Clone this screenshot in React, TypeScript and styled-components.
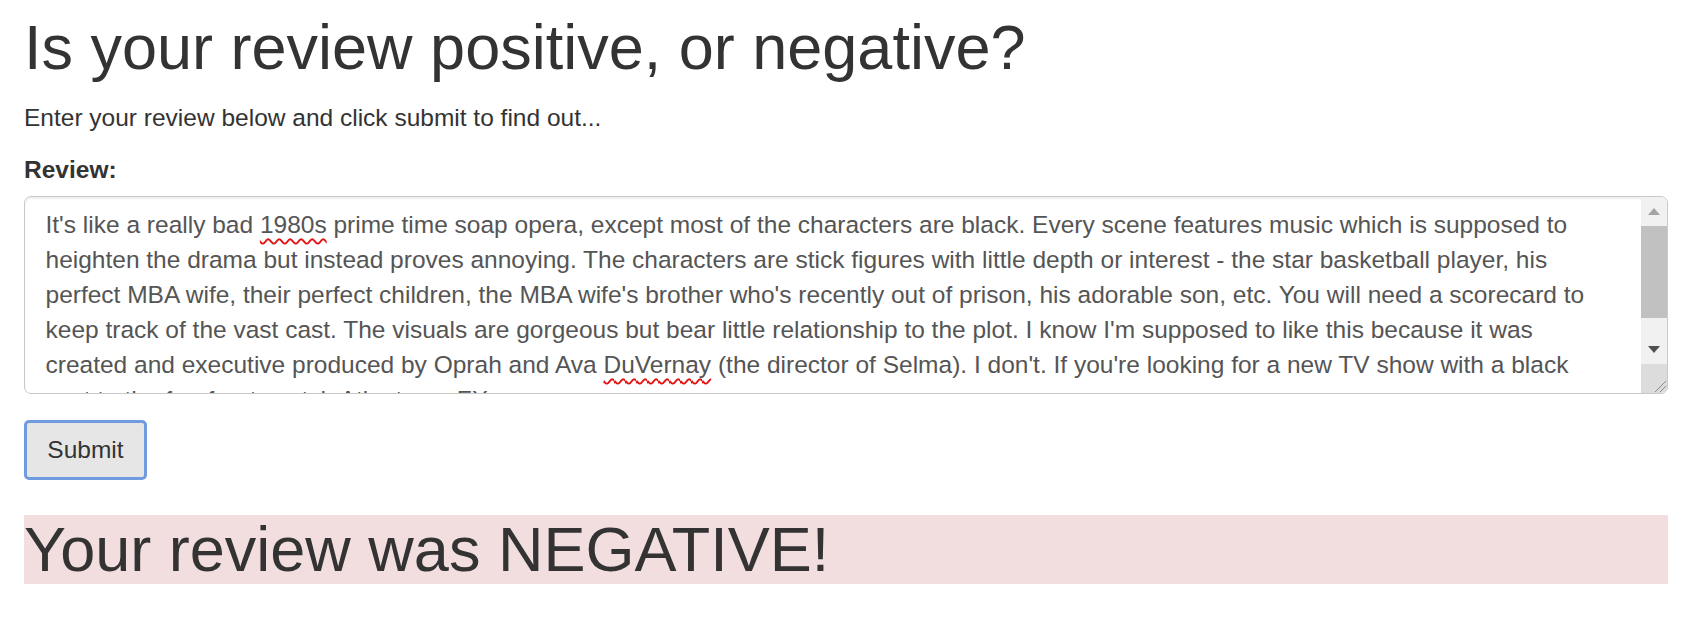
import styled, { createGlobalStyle } from 'styled-components';

const GlobalStyle = createGlobalStyle`
  html, body {
    margin: 0;
    padding: 0;
    background: #fff;
  }
  body {
    font-family: "Liberation Sans", Arial, Helvetica, sans-serif;
    color: #333;
    font-size: 24.5px;
    line-height: 35px;
  }
`;

const Page = styled.div`
  padding: 13px 0 0 24px;
  width: 1644px;
`;

const Title = styled.h1`
  margin: 0 0 17.5px;
  font-size: 63px;
  font-weight: 400;
  line-height: 1.1;
  color: #333;
`;

const Intro = styled.p`
  margin: 0 0 17.5px;
`;

const FormGroup = styled.div`
  margin-bottom: 26px;
`;

const Label = styled.label`
  display: inline-block;
  margin-bottom: 8.5px;
  font-weight: 700;
`;

const ReviewBox = styled.div`
  display: flex;
  height: 198px;
  box-sizing: border-box;
  border: 1.5px solid #c9c9c9;
  border-radius: 7px;
  overflow: hidden;
  background: #fff;
  box-shadow: inset 0 1.75px 1.75px rgba(0, 0, 0, 0.075);
`;

const ReviewText = styled.div`
  flex: 1;
  padding: 10px 32px 0 20.5px;
  color: #555;
  overflow: hidden;
`;

const Misspelled = styled.span`
  text-decoration: underline wavy #e3120f;
  text-decoration-thickness: 1.5px;
  text-underline-offset: 5px;
`;

const Scrollbar = styled.div`
  display: flex;
  flex-direction: column;
  width: 26px;
  background: #f1f1f1;
`;

const ArrowButton = styled.div`
  height: 29px;
  display: flex;
  align-items: center;
  justify-content: center;
`;

const Track = styled.div`
  flex: 1;
  display: flex;
  flex-direction: column;
`;

const Thumb = styled.div`
  height: 92px;
  background: #c1c1c1;
`;

const Resizer = styled.div`
  height: 29px;
  background: #dcdcdc;
  display: flex;
  align-items: flex-end;
  justify-content: flex-end;
`;

const SubmitButton = styled.button`
  font-family: inherit;
  font-size: 24.5px;
  line-height: 35px;
  color: #333;
  background: #e6e6e6;
  border: 3px solid #729bdf;
  border-radius: 5px;
  padding: 8px 20px 9px;
  width: 123px;
  height: 60px;
  cursor: pointer;
`;

const Result = styled.h1<{ $tone: 'danger' | 'success' }>`
  margin: 35px 0 17.5px;
  font-size: 63px;
  font-weight: 400;
  line-height: 1.1;
  color: #333;
  background: ${p => (p.$tone === 'danger' ? '#f2dede' : '#dff0d8')};
`;

const ArrowIcon = ({ up, color }: { up?: boolean; color: string }) => (
  <svg width="12" height="7" viewBox="0 0 12 7">
    <polygon points={up ? '0,7 12,7 6,0' : '0,0 12,0 6,7'} fill={color} />
  </svg>
);

export default function App() {
  return (
    <>
      <GlobalStyle />
      <Page>
        <Title>Is your review positive, or negative?</Title>
        <Intro>Enter your review below and click submit to find out...</Intro>
        <form onSubmit={e => e.preventDefault()}>
          <FormGroup>
            <Label htmlFor="review">Review:</Label>
            <ReviewBox id="review" role="textbox" aria-multiline="true">
              <ReviewText>
                It's like a really bad <Misspelled>1980s</Misspelled> prime time soap opera, except most of the
                characters are black. Every scene features music which is supposed to heighten the drama but
                instead proves annoying. The characters are stick figures with little depth or interest - the star
                basketball player, his perfect MBA wife, their perfect children, the MBA wife's brother who's
                recently out of prison, his adorable son, etc. You will need a scorecard to keep track of the vast
                cast. The visuals are gorgeous but bear little relationship to the plot. I know I'm supposed to like
                this because it was created and executive produced by Oprah and Ava <Misspelled>DuVernay</Misspelled>{' '}
                (the director of Selma). I don't. If you're looking for a new TV show with a black cast to the
                forefront, watch Atlanta on FX.
              </ReviewText>
              <Scrollbar>
                <ArrowButton>
                  <ArrowIcon up color="#a3a3a3" />
                </ArrowButton>
                <Track>
                  <Thumb />
                </Track>
                <ArrowButton>
                  <ArrowIcon color="#505050" />
                </ArrowButton>
                <Resizer>
                  <svg width="14" height="14" viewBox="0 0 14 14">
                    <line x1="2" y1="13" x2="13" y2="2" stroke="#8a8a8a" strokeWidth="1" />
                    <line x1="7" y1="13" x2="13" y2="7" stroke="#8a8a8a" strokeWidth="1" />
                  </svg>
                </Resizer>
              </Scrollbar>
            </ReviewBox>
          </FormGroup>
          <SubmitButton type="submit">Submit</SubmitButton>
        </form>
        <Result $tone="danger">Your review was NEGATIVE!</Result>
      </Page>
    </>
  );
}
